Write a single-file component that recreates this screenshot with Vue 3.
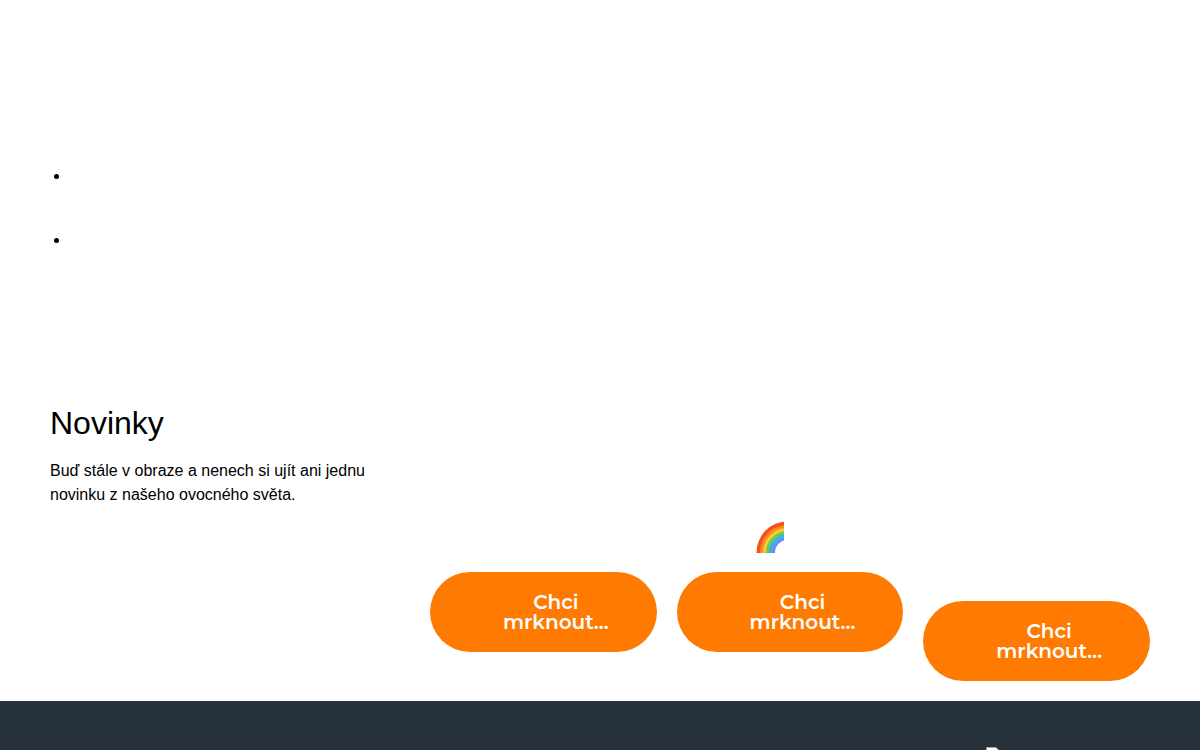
<script setup>
const cards = [
  { id: 1, icon: false, low: false },
  { id: 2, icon: true, low: false },
  { id: 3, icon: false, low: true },
]
const bands = [
  { r: 31, color: '#f4511e' },
  { r: 27.5, color: '#fb8c1c' },
  { r: 24.5, color: '#fdc935' },
  { r: 21.5, color: '#6cc95a' },
  { r: 18.5, color: '#35b5e5' },
  { r: 15, color: '#7c83f5' },
]
</script>

<template>
  <div class="page">
    <main class="main">
      <ul class="list">
        <li></li>
        <li></li>
      </ul>
      <section class="news">
        <div class="intro">
          <h2>Novinky</h2>
          <p>Buď stále v obraze a nenech si ujít ani jednu novinku z našeho ovocného světa.</p>
        </div>
        <div class="cards">
          <article v-for="card in cards" :key="card.id" class="card" :class="{ low: card.low }">
            <svg v-if="card.icon" class="rainbow" width="28" height="32" viewBox="0 0 28 32" role="img" aria-label="🌈">
              <circle v-for="band in bands" :key="band.r" cx="31.5" cy="31.5" :r="band.r" :fill="band.color" />
              <circle cx="31.5" cy="31.5" r="12.5" fill="#fff" />
            </svg>
            <a class="cta" href="#">Chci mrknout…</a>
          </article>
        </div>
      </section>
    </main>
    <footer class="footer">
      <svg class="picture" width="16" height="16" viewBox="0 0 16 16" aria-hidden="true">
        <path d="M0.5 0.5H10L15.5 6V15.5H0.5Z" fill="#fff" stroke="#a3a7ab" />
        <path d="M2 3H9V7H14V10L2 14Z" fill="#c4d5f5" />
      </svg>
    </footer>
  </div>
</template>

<style>
body {
  margin: 0;
  background: #fff;
}
</style>

<style scoped>
.page {
  display: flex;
  flex-direction: column;
  min-height: 100vh;
  font: 16px/24px "Liberation Sans", Arial, sans-serif;
  color: #000;
}
.main {
  padding: 164px 50px 20px;
}
.list {
  display: flex;
  flex-direction: column;
  gap: 40px;
  margin: 0;
  padding-left: 20px;
}
.list li {
  min-height: 24px;
}
.news {
  display: grid;
  grid-template-columns: 19fr 36fr;
  margin-top: 151px;
}
.intro {
  padding-right: 40px;
}
h2 {
  margin: 0 0 16px;
  font-size: 32px;
  line-height: 40px;
  font-weight: 400;
}
p {
  margin: 0;
}
.cards {
  display: grid;
  grid-template-columns: repeat(3, 1fr);
  gap: 20px;
  align-items: end;
  padding-top: 118px;
}
.card {
  display: flex;
  flex-direction: column;
  gap: 19px;
  padding-bottom: 29px;
}
.card.low {
  padding-bottom: 0;
}
.rainbow {
  margin-left: 79px;
}
.cta {
  padding: 20px 25px 20px 50px;
  border-radius: 40px;
  background: #ff7a00;
  color: #fff;
  font: 600 20px/20px Montserrat, Inter, sans-serif;
  text-align: center;
  text-decoration: none;
}
.footer {
  flex: 1;
  display: flex;
  justify-content: flex-end;
  padding: 46px 198px 0 50px;
  background: #27323d;
}
</style>
